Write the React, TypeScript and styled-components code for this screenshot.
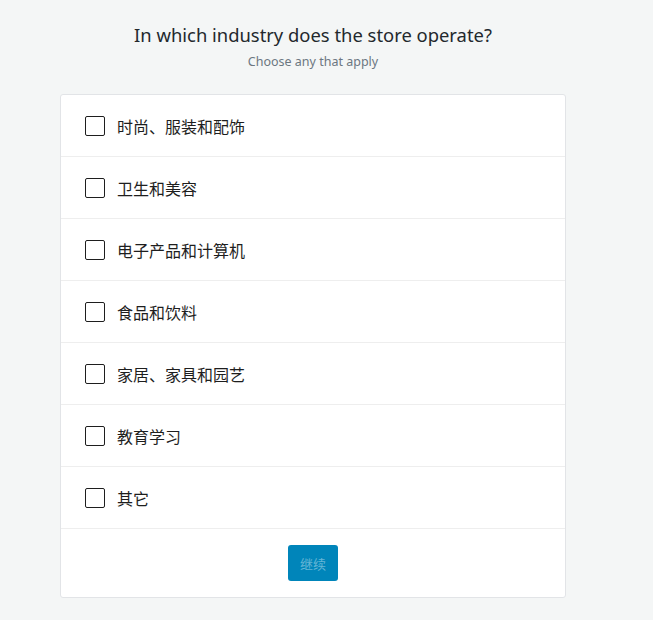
import styled, { createGlobalStyle } from "styled-components";

const GlobalStyle = createGlobalStyle`
  html, body {
    margin: 0;
    padding: 0;
    background: #f4f6f6;
    font-family: "Noto Sans", "Noto Sans CJK SC", sans-serif;
  }
`;

const Page = styled.div`
  width: 506px;
  margin-left: 60px;
  padding-top: 20px;
`;

const Title = styled.h1`
  margin: 0;
  font-size: 18.4px;
  font-weight: 400;
  line-height: 30px;
  color: #23282d;
  text-align: center;
`;

const Subtitle = styled.p`
  margin: 0;
  font-size: 12.5px;
  line-height: 24px;
  color: #6c7781;
  text-align: center;
`;

const Card = styled.div`
  margin-top: 20px;
  background: #fff;
  border: 1px solid #e2e4e7;
  border-radius: 3px;
`;

const Row = styled.label`
  display: flex;
  align-items: center;
  gap: 12px;
  height: 61px;
  padding: 0 24px;
  border-bottom: 1px solid #eeeeee;
  font-family: "Noto Sans CJK SC", sans-serif;
  font-size: 16px;
  color: #1e1e1e;
  cursor: pointer;
`;

const Box = styled.span`
  width: 18px;
  height: 18px;
  border: 1px solid #1e1e1e;
  border-radius: 2px;
  background: #fff;
`;

const Footer = styled.div`
  display: flex;
  justify-content: center;
  padding: 16px 0 16px;
`;

const Button = styled.button`
  height: 36px;
  padding: 0 12px;
  border: none;
  border-radius: 3px;
  background: #0085ba;
  color: #66b6d6;
  font-family: "Noto Sans CJK SC", sans-serif;
  font-size: 13px;
`;

const options = [
  "时尚、服装和配饰",
  "卫生和美容",
  "电子产品和计算机",
  "食品和饮料",
  "家居、家具和园艺",
  "教育学习",
  "其它",
];

export default function App() {
  return (
    <>
      <GlobalStyle />
      <Page>
        <Title>In which industry does the store operate?</Title>
        <Subtitle>Choose any that apply</Subtitle>
        <Card>
          {options.map((o) => (
            <Row key={o}>
              <Box />
              {o}
            </Row>
          ))}
          <Footer>
            <Button disabled>继续</Button>
          </Footer>
        </Card>
      </Page>
    </>
  );
}
